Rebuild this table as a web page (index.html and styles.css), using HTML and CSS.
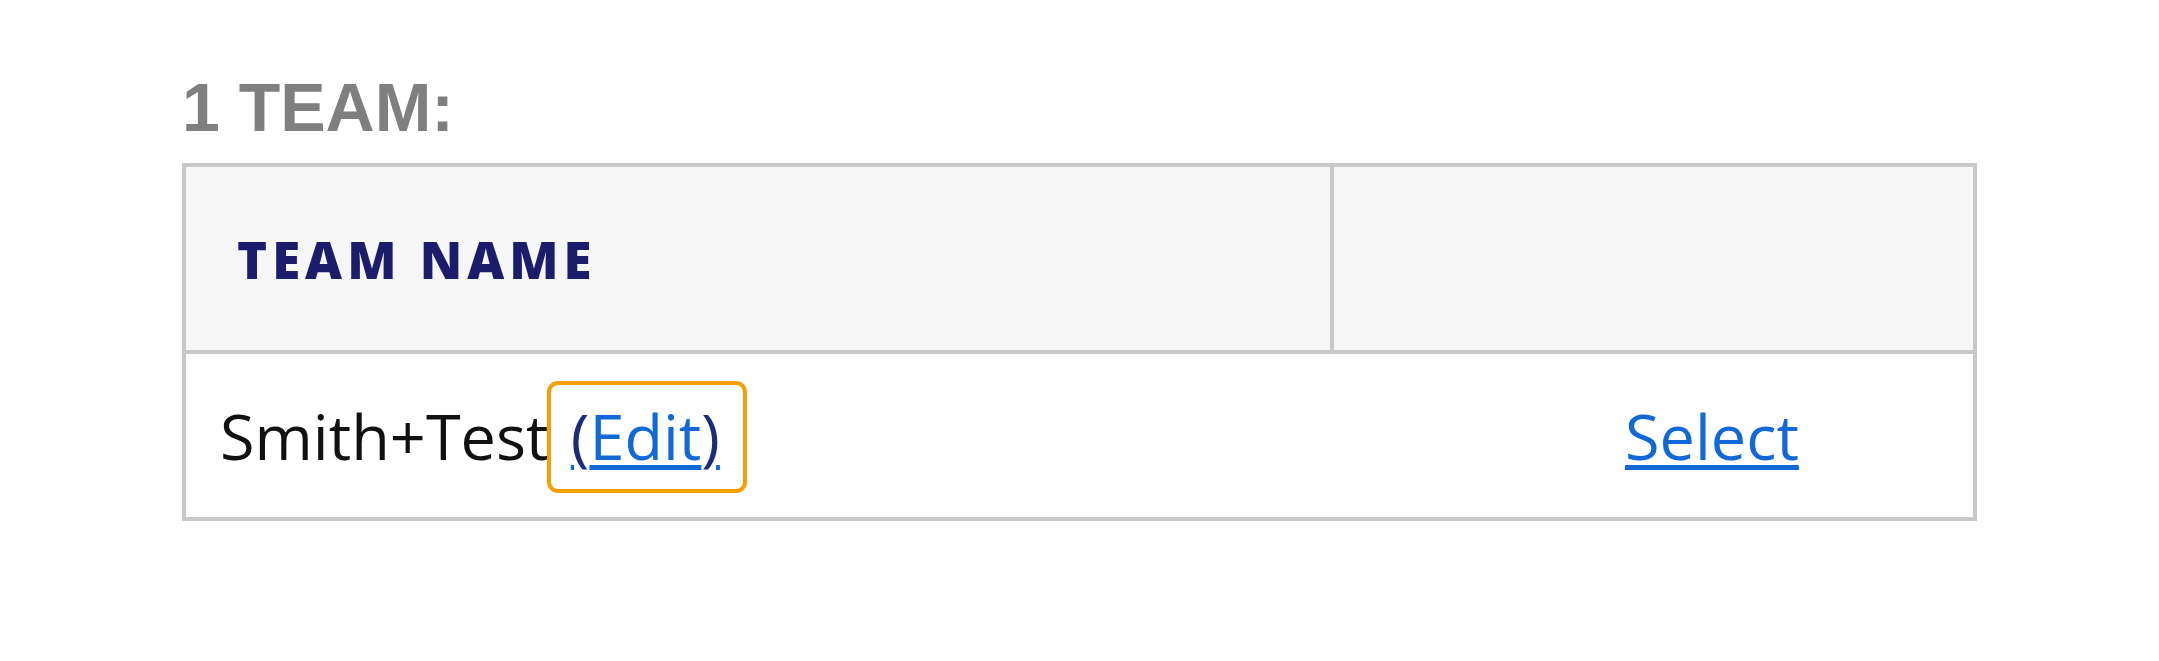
FILE: index.html
```html
<!DOCTYPE html>
<html>
<head>
<meta charset="utf-8">
<link rel="stylesheet" href="styles.css">
</head>
<body>
<main class="page">
  <h2 class="count">1 TEAM:</h2>
  <table class="teams">
    <colgroup>
      <col class="col-name">
      <col class="col-action">
    </colgroup>
    <thead>
      <tr>
        <th class="th-name">TEAM NAME</th>
        <th class="th-action"></th>
      </tr>
    </thead>
    <tbody>
      <tr>
        <td class="td-name">Smith+Test <span class="edit-wrap"><a class="link edit" href="#"><span class="paren">(</span>Edit<span class="paren">)</span></a></span></td>
        <td class="td-action"><a class="link" href="#">Select</a></td>
      </tr>
    </tbody>
  </table>
</main>
</body>
</html>
```

FILE: styles.css
```css
html, body {
  margin: 0;
  padding: 0;
  background: #ffffff;
}

.page {
  padding: 73px 0 0 182px;
  font-family: "Open Sans", "Liberation Sans", sans-serif;
}

.count {
  margin: 0 0 22px 0;
  font-family: "Liberation Sans", Arial, sans-serif;
  font-weight: 700;
  font-size: 68px;
  line-height: 68px;
  color: #7f7f7f;
}

.teams {
  border-collapse: separate;
  border-spacing: 0;
  border: 4px solid #c8c8c8;
  table-layout: fixed;
  width: 1795px;
}

.col-name { width: 1148px; }
.col-action { width: auto; }

.teams th {
  background: #f6f6f6;
  height: 183px;
  padding: 0;
  border-bottom: 4px solid #c8c8c8;
  text-align: left;
}

.th-name {
  border-right: 4px solid #c8c8c8;
  padding-left: 51px !important;
  font-weight: 800;
  font-size: 51px;
  letter-spacing: 5px;
  color: #1c1c6c;
}

.teams td {
  height: 163px;
  padding: 0;
  font-size: 63px;
  color: #111111;
}

.td-name {
  padding-left: 34px !important;
}

.td-action {
  padding-left: 291px !important;
}

.link {
  color: #1268d6;
  text-decoration: underline;
  text-decoration-thickness: 5px;
  text-underline-offset: 5px;
}

.paren {
  color: #1d2c7a;
}

.edit-wrap {
  position: relative;
  margin-left: 6px;
}

.edit-wrap::after {
  content: "";
  position: absolute;
  left: -24px;
  right: -27px;
  top: -12px;
  bottom: -15px;
  border: 4px solid #f5a000;
  border-radius: 11px;
}
```
